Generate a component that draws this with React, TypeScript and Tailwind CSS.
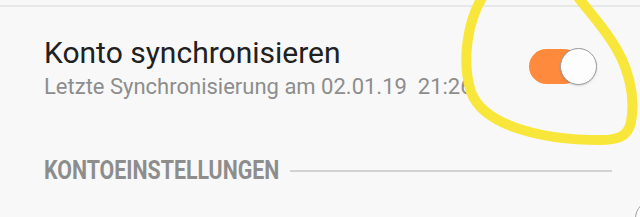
import React from 'react';

const Toggle: React.FC<{ on: boolean }> = ({ on }) => (
  <div className="relative w-[68px] h-[37px] shrink-0">
    <div
      className={`absolute left-0 top-[1px] h-[35px] w-[52px] rounded-full ${
        on ? 'bg-[#fe8a3d]' : 'bg-[#cfcfcf]'
      }`}
    />
    <div className="absolute right-0 top-0 h-[37px] w-[37px] rounded-full bg-[#fdfdfd] border border-[#9c9c9c] shadow-[0_1px_2px_rgba(0,0,0,0.15)]" />
  </div>
);

// hand-drawn marker circle around the switch
const Annotation: React.FC = () => (
  <svg
    className="absolute inset-0 pointer-events-none"
    width="640"
    height="217"
    viewBox="0 0 640 217"
  >
    <path
      d="M483,-4 C468,20 461,60 471,92 C483,125 540,140 600,140 C615,140 628,138 631,122 C636,95 628,65 611,40 C599,22 586,8 577,-4"
      fill="none"
      stroke="#f9e63a"
      strokeWidth="10"
      strokeLinecap="round"
      strokeLinejoin="round"
    />
  </svg>
);

export default function App() {
  return (
    <div
      className="relative w-[640px] h-[217px] overflow-hidden bg-[#f8f8f8]"
      style={{ fontFamily: 'Roboto, "Noto Sans", sans-serif' }}
    >
      <div className="mt-[5px] h-[2px] bg-[#e7e7e7]" />

      <div className="flex items-start justify-between pl-[44px] pr-[43px] pt-[28px]">
        <div className="flex flex-col">
          <div className="text-[30px] leading-[35px] text-[#212121]">Konto synchronisieren</div>
          <div className="mt-[4px] text-[22px] leading-[26px] text-[#8d8d8d] whitespace-pre">
            Letzte Synchronisierung am 02.01.19  21:26
          </div>
        </div>
        <div className="mt-[13px]">
          <Toggle on />
        </div>
      </div>

      <div className="flex items-center pl-[44px] pr-[28px] mt-[55px]">
        <div className="w-[235px] shrink-0 whitespace-nowrap">
          <span className="inline-block origin-left scale-x-[0.82] text-[26px] leading-[30px] font-bold text-[#8d8d8d]">
            KONTOEINSTELLUNGEN
          </span>
        </div>
        <div className="ml-[11px] flex-1 h-[2px] bg-[#d2d2d2]" />
      </div>

      <div className="flex justify-end mt-[14px]">
        <div className="-mr-[32px] h-[37px] w-[37px] rounded-full border border-[#a0a0a0] bg-[#fdfdfd]" />
      </div>

      <Annotation />
    </div>
  );
}
